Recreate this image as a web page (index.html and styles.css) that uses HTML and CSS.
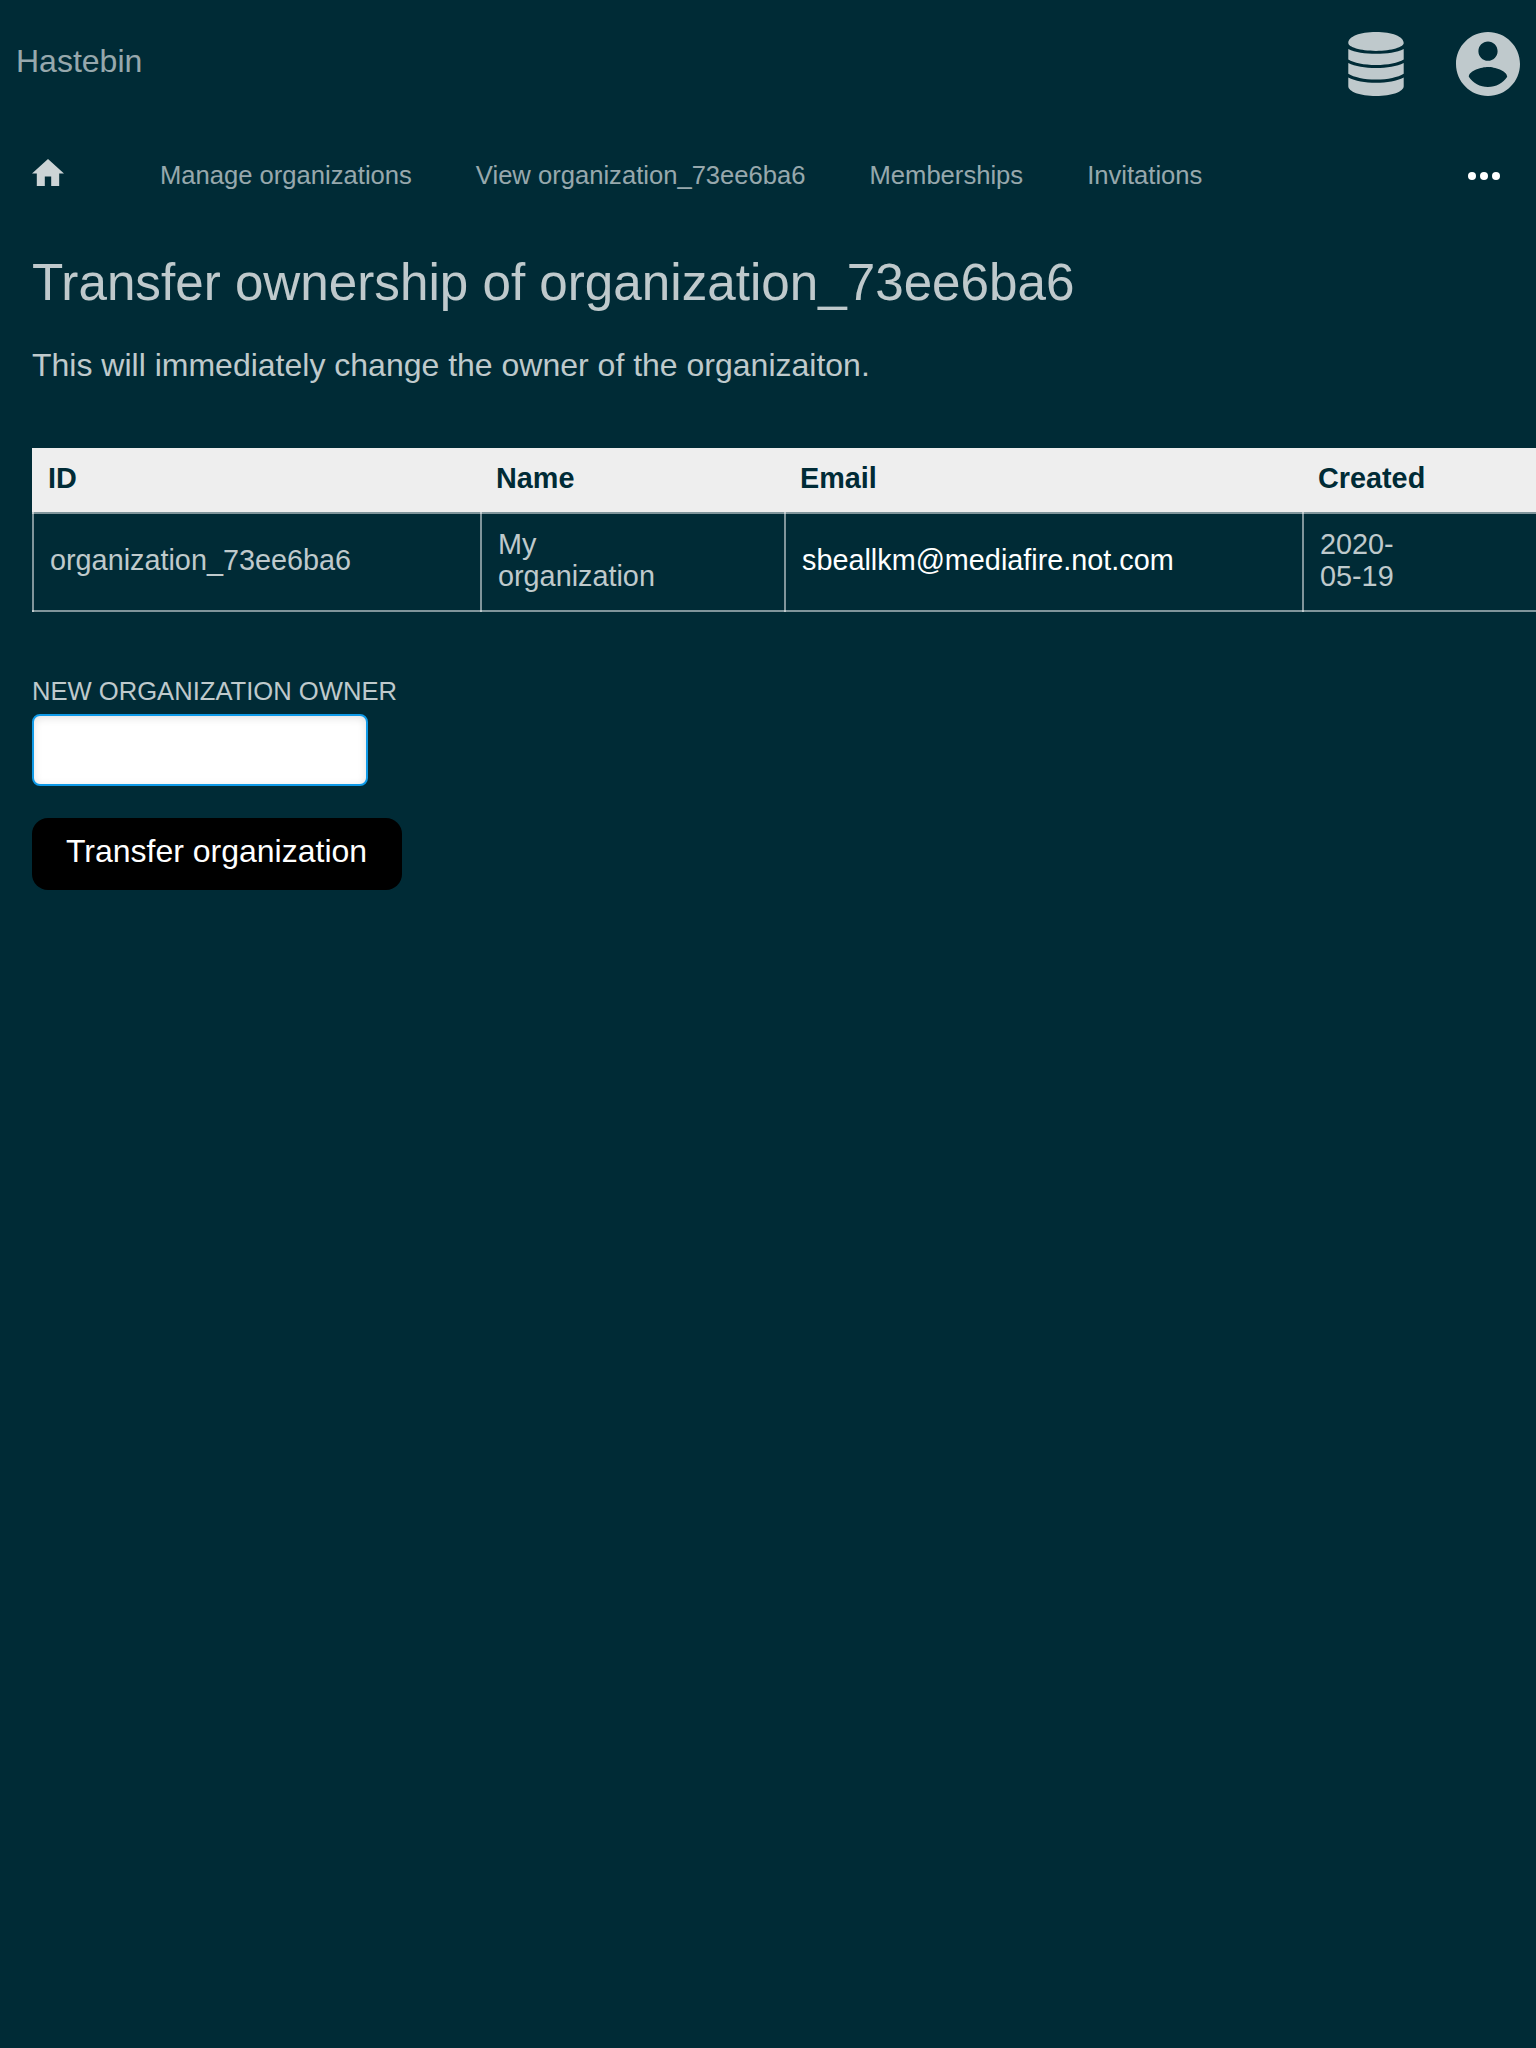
FILE: index.html
```html
<!DOCTYPE html>
<html lang="en">
<head>
<meta charset="utf-8">
<title>Hastebin</title>
<link rel="stylesheet" href="styles.css">
</head>
<body>
<header class="header">
  <a class="brand">Hastebin</a>
  <div class="header-icons">
    <svg class="icon-db" viewBox="0 0 56 64"><path d="M.3 11C.3 4.500 12 0 28 0s27.700 4.500 27.700 11C55.700 15 44 18.900 28 18.900S.3 15 .3 11zM.3 16.900C7 20.200 17 21.700 28 21.700s21-1.500 27.700-4.800v10.500C50 30.800 40 32.900 28 32.900S6 30.800 .3 27.400zM.3 31C7 34.300 17 36.100 28 36.100s21-1.800 27.700-5.100v10.700C50 45.200 40 47.500 28 47.500S6 45.200 .3 41.700zM.3 45.400C7 48.900 17 50.700 28 50.700s21-1.800 27.700-5.300v8.800C55.700 59.500 44 64 28 64S.3 59.500 .3 54.200z"/></svg>
    <svg class="icon-user" viewBox="2 2 20 20"><path d="M12 2C6.480 2 2 6.480 2 12s4.480 10 10 10 10-4.480 10-10S17.520 2 12 2zm0 3c1.660 0 3 1.340 3 3s-1.340 3-3 3-3-1.340-3-3 1.340-3 3-3zm0 14.200c-2.500 0-4.710-1.280-6-3.220.03-1.990 4-3.080 6-3.080 1.990 0 5.970 1.090 6 3.080-1.290 1.940-3.500 3.220-6 3.220z"/></svg>
  </div>
</header>
<nav class="nav">
  <a class="home"><svg class="icon-home" viewBox="2 3 20 17"><path d="M10 20v-6h4v6h5v-8h3L12 3 2 12h3v8z"/></svg></a>
  <a class="nav-link">Manage organizations</a>
  <a class="nav-link">View organization_73ee6ba6</a>
  <a class="nav-link">Memberships</a>
  <a class="nav-link">Invitations</a>
  <svg class="icon-more" viewBox="0 0 32 8"><circle cx="4" cy="4" r="4"/><circle cx="16" cy="4" r="4"/><circle cx="28" cy="4" r="4"/></svg>
</nav>
<main class="main">
  <h1>Transfer ownership of organization_73ee6ba6</h1>
  <p class="intro">This will immediately change the owner of the organizaiton.</p>
  <table class="table">
    <colgroup><col class="col-id"><col class="col-name"><col class="col-email"><col class="col-created"></colgroup>
    <thead><tr><th>ID</th><th>Name</th><th>Email</th><th>Created</th></tr></thead>
    <tbody><tr><td>organization_73ee6ba6</td><td>My<br>organization</td><td class="email">sbeallkm@mediafire.not.com</td><td>2020-<br>05-19</td></tr></tbody>
  </table>
  <form class="form">
    <label for="owner">NEW ORGANIZATION OWNER</label>
    <input id="owner" type="text">
    <button type="button">Transfer organization</button>
  </form>
</main>
</body>
</html>
```
FILE: styles.css
```css
* { box-sizing: border-box; }

body {
  margin: 0;
  min-height: 2048px;
  overflow: hidden;
  background: #002b36;
  color: rgba(255, 255, 255, .75);
  font: 32px/48px "Liberation Sans", Arial, sans-serif;
}

svg { display: block; fill: currentColor; }

.header {
  display: flex;
  justify-content: space-between;
  align-items: flex-start;
  height: 128px;
  padding: 32px 16px 0;
}
.brand { padding-top: 5px; color: rgba(255, 255, 255, .6); }
.header-icons { display: flex; gap: 52px; }
.icon-db { width: 56px; height: 64px; }
.icon-user { width: 64px; height: 64px; }

.nav {
  display: flex;
  align-items: center;
  gap: 64px;
  height: 96px;
  padding: 0 36px 0 32px;
  font-size: 25.6px;
  color: rgba(255, 255, 255, .6);
}
.nav-link { padding-bottom: 2px; }
.home { margin-right: 32px; color: rgba(255, 255, 255, .8); }
.icon-home { width: 32px; height: 27.2px; margin-bottom: 7px; }
.icon-more { width: 32px; height: 8px; margin-left: auto; color: #fff; }

.main { padding: 0 32px; }
h1 {
  margin: 27px 0 0;
  font-size: 51.2px;
  font-weight: 400;
  line-height: 64px;
}
.intro { margin: 26px 0 59px; }

.table {
  width: 1540px;
  table-layout: fixed;
  border-spacing: 0;
  font-size: 28.8px;
  line-height: 32px;
}
.col-id { width: 448px; }
.col-name { width: 304px; }
.col-email { width: 518px; }
.table th {
  height: 64px;
  padding: 0 16px 4px;
  background: #eee;
  color: #002b36;
  text-align: left;
}
/* Translucent rules that overlap, and so brighten, at the cell corners. */
.table td {
  --rule: linear-gradient(rgba(255, 255, 255, .5), rgba(255, 255, 255, .5));
  height: 100px;
  padding: 16px 16px 20px 18px;
  background:
    var(--rule) left / 2px 100% no-repeat,
    var(--rule) top / 100% 2px no-repeat,
    var(--rule) bottom / 100% 2px no-repeat;
}
.table .email { color: #fff; }

.form {
  display: flex;
  flex-direction: column;
  align-items: flex-start;
  margin-top: 60px;
}
.form label { font-size: 25.6px; line-height: 38px; }
.form input {
  width: 336px;
  height: 72px;
  margin: 4px 0 32px;
  border: 2px solid #0f9ae8;
  border-radius: 8px;
  background: #fff;
  box-shadow: inset 0 2px 8px rgba(0, 0, 0, .12);
}
.form button {
  width: 370px;
  height: 72px;
  padding: 0 1px 6px 0;
  border: 0;
  border-radius: 16px;
  background: #000;
  color: #fff;
  font: inherit;
}
```
